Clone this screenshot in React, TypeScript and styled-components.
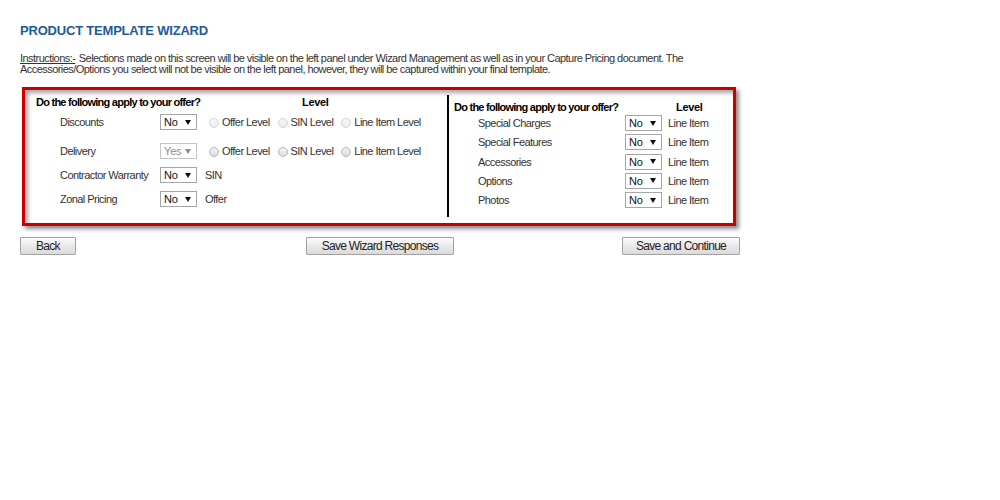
import React from "react";
import styled, { createGlobalStyle } from "styled-components";

const Global = createGlobalStyle`
  html, body { margin: 0; padding: 0; background: #fff; }
  body { font-family: "Liberation Sans", Arial, sans-serif; color: #333; }
`;

const Page = styled.div`
  padding: 23px 20px 0 20px;
  width: 720px;
`;

const Title = styled.h1`
  margin: 0;
  font-size: 13px;
  line-height: 15px;
  font-weight: bold;
  letter-spacing: -0.2px;
  color: #1c5b99;
`;

const Instructions = styled.p`
  margin: 15px 0 0 0;
  font-size: 11px;
  line-height: 11px;
  letter-spacing: -0.55px;
  color: #333;
  width: 720px;
`;

const Underline = styled.span`
  display: inline-block;
  line-height: 11px;
  text-decoration: underline;
  padding-right: 1px;
`;

const Box = styled.div`
  margin: 12px 4px 0 2px;
  border: 3px solid #c90000;
  box-shadow: 3px 3px 4px rgba(0, 0, 0, 0.45), inset 3px 3px 4px rgba(0, 0, 0, 0.35);
  padding: 5px 0 6px 0;
  display: flex;
  align-items: stretch;
`;

const LeftCol = styled.div`
  width: 411px;
  padding-left: 11px;
  display: flex;
  flex-direction: column;
`;

const RightCol = styled.div`
  flex: 1;
  min-height: 122px;
  box-sizing: border-box;
  border-left: 2px solid #000;
  padding: 5px 0 0 5px;
  display: flex;
  flex-direction: column;
`;

const Header = styled.div<{ $col: number }>`
  display: grid;
  grid-template-columns: ${(p) => p.$col}px auto;
  font-size: 11px;
  line-height: 14px;
  font-weight: bold;
  letter-spacing: -0.75px;
  color: #000;
`;

const HeaderLevel = styled.span`
  letter-spacing: -0.3px;
`;

const Row = styled.div<{ $label: number; $top: number }>`
  display: grid;
  grid-template-columns: ${(p) => p.$label}px 37px auto;
  align-items: center;
  height: 16px;
  margin-top: ${(p) => p.$top}px;
  padding-left: 24px;
  font-size: 11px;
  letter-spacing: -0.55px;
  color: #333;
`;

const Label = styled.span`
  white-space: nowrap;
`;

const Select = styled.div<{ $disabled?: boolean }>`
  box-sizing: border-box;
  height: 16px;
  width: 37px;
  border: 1px solid ${(p) => (p.$disabled ? "#c4c4c4" : "#a6a6a6")};
  background: #fff;
  display: flex;
  align-items: center;
  justify-content: space-between;
  padding: 0 5px 0 3px;
  font-size: 11px;
  letter-spacing: -0.2px;
  color: ${(p) => (p.$disabled ? "#8c8c8c" : "#111")};
`;

const Arrow = styled.span<{ $disabled?: boolean }>`
  width: 0;
  height: 0;
  border-left: 3px solid transparent;
  border-right: 3px solid transparent;
  border-top: 5px solid ${(p) => (p.$disabled ? "#8c8c8c" : "#111")};
`;

const Levels = styled.div<{ $gap: number }>`
  display: flex;
  align-items: center;
  white-space: nowrap;
  margin-left: ${(p) => p.$gap}px;
`;

const Radio = styled.span<{ $faint?: boolean }>`
  box-sizing: border-box;
  display: inline-block;
  width: 10px;
  height: 10px;
  border-radius: 50%;
  border: 1px solid ${(p) => (p.$faint ? "#d4d4d4" : "#b4b4b4")};
  background: ${(p) =>
    p.$faint
      ? "linear-gradient(#f6f6f6, #ececec)"
      : "linear-gradient(#f2f2f2, #dedede)"};
  margin: 1px 3px 0 4px;
`;

const LevelText = styled.span<{ $space?: number }>`
  margin-right: ${(p) => p.$space ?? 0}px;
`;

const RightRows = styled.div`
  display: flex;
  flex-direction: column;
  gap: 3.25px;
  margin-top: 1px;
`;

const Buttons = styled.div`
  display: grid;
  grid-template-columns: 1fr auto 1fr;
  align-items: center;
  margin-top: 11px;
`;

const Button = styled.button<{ $w: number; $align: "start" | "center" | "end" }>`
  box-sizing: border-box;
  justify-self: ${(p) => p.$align};
  width: ${(p) => p.$w}px;
  height: 18px;
  padding: 0;
  border: 1px solid #a3a3a3;
  border-radius: 1px;
  background: linear-gradient(#fbfbfb, #e9e9e9 50%, #dadada);
  font-family: "Liberation Sans", Arial, sans-serif;
  font-size: 12px;
  letter-spacing: -0.7px;
  color: #222;
  line-height: 16px;
`;

const Sel = ({ value, disabled }: { value: string; disabled?: boolean }) => (
  <Select $disabled={disabled}>
    <span>{value}</span>
    <Arrow $disabled={disabled} />
  </Select>
);

const RadioLevels = ({ faint }: { faint?: boolean }) => (
  <Levels $gap={8}>
    <Radio $faint={faint} />
    <LevelText $space={4}>Offer Level</LevelText>
    <Radio $faint={faint} />
    <LevelText $space={4}>SIN Level</LevelText>
    <Radio $faint={faint} />
    <LevelText>Line Item Level</LevelText>
  </Levels>
);

const rightItems = ["Special Charges", "Special Features", "Accessories", "Options", "Photos"];

export default function App() {
  return (
    <>
      <Global />
      <Page>
        <Title>PRODUCT TEMPLATE WIZARD</Title>
        <Instructions>
          <Underline>Instructions:-</Underline> Selections made on this screen will be visible on the left
          panel under Wizard Management as well as in your Capture Pricing document. The
          Accessories/Options you select will not be visible on the left panel, however, they will be
          captured within your final template.
        </Instructions>
        <Box>
          <LeftCol>
            <Header $col={266}>
              <span>Do the following apply to your offer?</span>
              <HeaderLevel>Level</HeaderLevel>
            </Header>
            <Row $label={100} $top={5}>
              <Label>Discounts</Label>
              <Sel value="No" />
              <RadioLevels faint />
            </Row>
            <Row $label={100} $top={13}>
              <Label>Delivery</Label>
              <Sel value="Yes" disabled />
              <RadioLevels />
            </Row>
            <Row $label={100} $top={8}>
              <Label>Contractor Warranty</Label>
              <Sel value="No" />
              <Levels $gap={8}>SIN</Levels>
            </Row>
            <Row $label={100} $top={8}>
              <Label>Zonal Pricing</Label>
              <Sel value="No" />
              <Levels $gap={8}>Offer</Levels>
            </Row>
          </LeftCol>
          <RightCol>
            <Header $col={222}>
              <span>Do the following apply to your offer?</span>
              <HeaderLevel>Level</HeaderLevel>
            </Header>
            <RightRows>
              {rightItems.map((item) => (
                <Row key={item} $label={147} $top={0}>
                  <Label>{item}</Label>
                  <Sel value="No" />
                  <Levels $gap={6}>Line Item</Levels>
                </Row>
              ))}
            </RightRows>
          </RightCol>
        </Box>
        <Buttons>
          <Button $w={56} $align="start">Back</Button>
          <Button $w={148} $align="center">Save Wizard Responses</Button>
          <Button $w={118} $align="end">Save and Continue</Button>
        </Buttons>
      </Page>
    </>
  );
}
